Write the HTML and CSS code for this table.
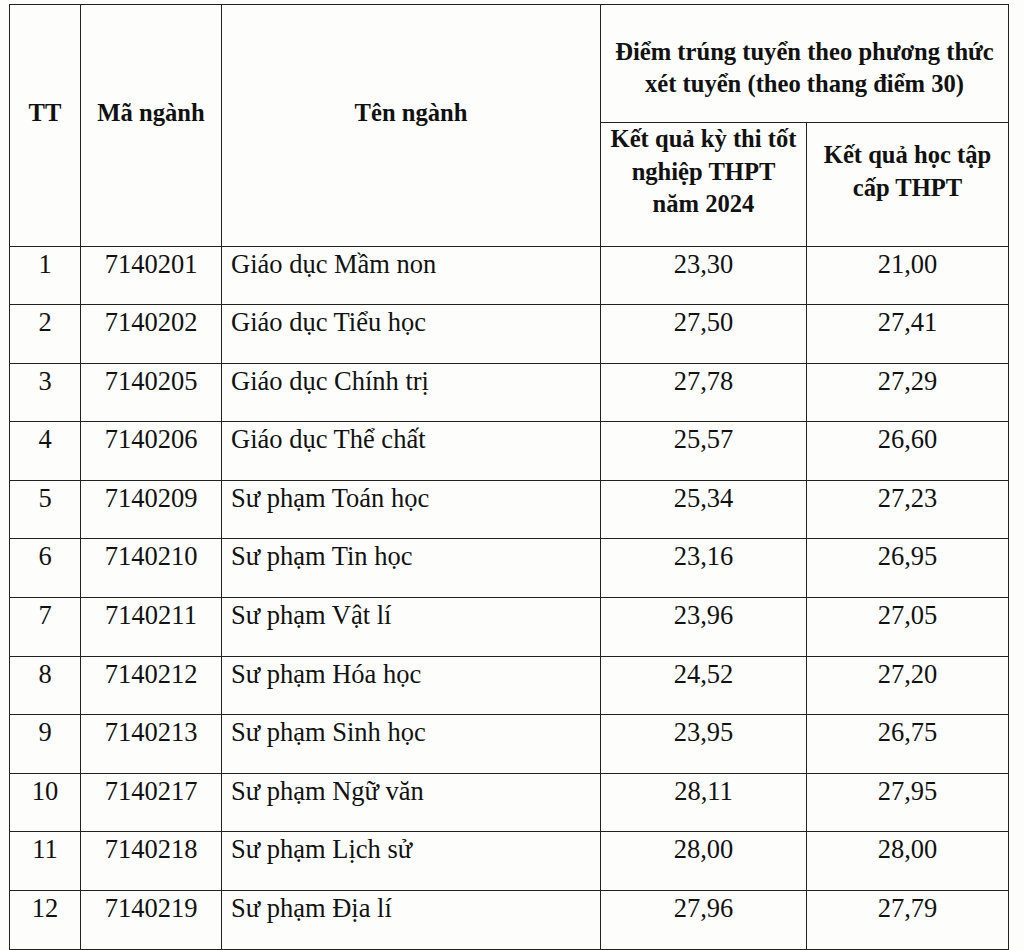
FILE: index.html
```html
<!DOCTYPE html>
<html lang="vi">
<head>
<meta charset="utf-8">
<link rel="stylesheet" href="styles.css">
</head>
<body>
<table class="scores">
  <colgroup>
    <col class="c-tt"><col class="c-code"><col class="c-name"><col class="c-s1"><col class="c-s2">
  </colgroup>
  <thead>
    <tr class="h1">
      <th rowspan="2" class="hmain">TT</th>
      <th rowspan="2" class="hmain">Mã ngành</th>
      <th rowspan="2" class="hmain">Tên ngành</th>
      <th colspan="2" class="hgroup">Điểm trúng tuyển theo phương thức<br>xét tuyển (theo thang điểm 30)</th>
    </tr>
    <tr class="h2">
      <th class="hsub">Kết quả kỳ thi tốt<br>nghiệp THPT<br>năm 2024</th>
      <th class="hsub">Kết quả học tập<br>cấp THPT</th>
    </tr>
  </thead>
  <tbody>
    <tr><td class="tt">1</td><td class="code">7140201</td><td class="name">Giáo dục Mầm non</td><td class="sc">23,30</td><td class="sc">21,00</td></tr>
    <tr><td class="tt">2</td><td class="code">7140202</td><td class="name">Giáo dục Tiểu học</td><td class="sc">27,50</td><td class="sc">27,41</td></tr>
    <tr><td class="tt">3</td><td class="code">7140205</td><td class="name">Giáo dục Chính trị</td><td class="sc">27,78</td><td class="sc">27,29</td></tr>
    <tr><td class="tt">4</td><td class="code">7140206</td><td class="name">Giáo dục Thể chất</td><td class="sc">25,57</td><td class="sc">26,60</td></tr>
    <tr><td class="tt">5</td><td class="code">7140209</td><td class="name">Sư phạm Toán học</td><td class="sc">25,34</td><td class="sc">27,23</td></tr>
    <tr><td class="tt">6</td><td class="code">7140210</td><td class="name">Sư phạm Tin học</td><td class="sc">23,16</td><td class="sc">26,95</td></tr>
    <tr><td class="tt">7</td><td class="code">7140211</td><td class="name">Sư phạm Vật lí</td><td class="sc">23,96</td><td class="sc">27,05</td></tr>
    <tr><td class="tt">8</td><td class="code">7140212</td><td class="name">Sư phạm Hóa học</td><td class="sc">24,52</td><td class="sc">27,20</td></tr>
    <tr><td class="tt">9</td><td class="code">7140213</td><td class="name">Sư phạm Sinh học</td><td class="sc">23,95</td><td class="sc">26,75</td></tr>
    <tr><td class="tt">10</td><td class="code">7140217</td><td class="name">Sư phạm Ngữ văn</td><td class="sc">28,11</td><td class="sc">27,95</td></tr>
    <tr><td class="tt">11</td><td class="code">7140218</td><td class="name">Sư phạm Lịch sử</td><td class="sc">28,00</td><td class="sc">28,00</td></tr>
    <tr><td class="tt">12</td><td class="code">7140219</td><td class="name">Sư phạm Địa lí</td><td class="sc">27,96</td><td class="sc">27,79</td></tr>
    <tr><td class="tt"></td><td class="code"></td><td class="name"></td><td class="sc"></td><td class="sc"></td></tr>
  </tbody>
</table>
</body>
</html>
```
FILE: styles.css
```css
html, body {
  margin: 0;
  padding: 0;
  background: #fdfdfc;
  overflow: hidden;
  height: 950px;
}
body {
  padding: 4px 0 0 9px;
  font-family: "Liberation Serif", "Times New Roman", serif;
  color: #111;
}
.scores {
  border-collapse: collapse;
  table-layout: fixed;
  width: 999px;
}
.c-tt { width: 71px; }
.c-code { width: 141px; }
.c-name { width: 379px; }
.c-s1 { width: 206px; }
.c-s2 { width: 202px; }
.scores th, .scores td {
  border: 1.8px solid #222;
  padding: 0;
}
.scores th {
  font-weight: bold;
  font-size: 24.6px;
  line-height: 32.5px;
}
.h1 { height: 118px; }
.h2 { height: 120px; }
.hmain {
  vertical-align: middle;
  padding-bottom: 24px !important;
}
.hgroup {
  vertical-align: middle;
  padding-top: 9px !important;
}
.hsub {
  vertical-align: middle;
  padding-bottom: 25px !important;
}
.scores tbody tr { height: 58.6px; }
.scores td {
  font-size: 26.5px;
  line-height: 30px;
  vertical-align: top;
  padding-top: 2px;
}
.tt, .code, .sc { text-align: center; }
.name { text-align: left; padding-left: 9px !important; }
```
